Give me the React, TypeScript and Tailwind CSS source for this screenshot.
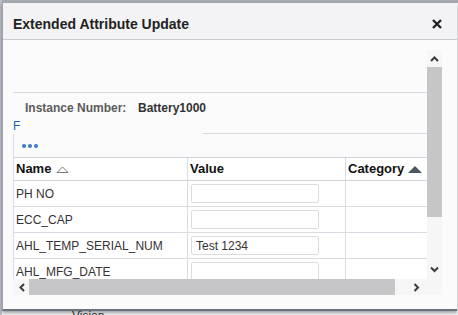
import React from "react";

const rows = [
  { name: "PH NO", value: "" },
  { name: "ECC_CAP", value: "" },
  { name: "AHL_TEMP_SERIAL_NUM", value: "Test 1234" },
  { name: "AHL_MFG_DATE", value: "" },
];

function Chevron({ dir }: { dir: "up" | "down" | "left" | "right" }) {
  const d = {
    up: "M1 6 L4.5 2.5 L8 6",
    down: "M1 2.5 L4.5 6 L8 2.5",
    left: "M6 1 L2.5 4.5 L6 8",
    right: "M2.5 1 L6 4.5 L2.5 8",
  }[dir];
  return (
    <svg width="9" height="9" viewBox="0 0 9 9">
      <path d={d} fill="none" stroke="#3b3b3f" strokeWidth="2" />
    </svg>
  );
}

export default function App() {
  return (
    <div className="relative w-[458px] h-[315px] overflow-hidden bg-[#f4f5f7] font-['Liberation_Sans',Arial,sans-serif]">
      {/* page behind the dialog */}
      <div className="absolute left-0 top-0 w-full h-[3px] bg-[#a6a9b2]" />
      <div className="absolute left-0 top-0 w-[2px] h-full bg-[#b9bcc6]" />
      <div className="absolute left-[72px] top-[310px] text-[12px] leading-[12px] text-[#333]">Vision</div>

      {/* dialog */}
      <div className="absolute left-[2px] top-[3px] w-[455px] h-[308px] flex flex-col bg-[#fbfbfc] border-l border-[#9ea3ad] border-b-[2px] border-b-[#6b7280] shadow-[0_2px_3px_rgba(0,0,0,0.35)]">
        {/* header */}
        <div className="h-[37px] shrink-0 flex items-center justify-between pl-[10px] pr-[15px] pt-[6px] bg-[#f3f3f5] border-b border-[#c9ccd3]">
          <span className="text-[14px] font-bold text-[#222] leading-none">Extended Attribute Update</span>
          <svg width="10" height="10" viewBox="0 0 10 10">
            <path d="M1 1 L9 9 M9 1 L1 9" stroke="#222" strokeWidth="2.4" />
          </svg>
        </div>

        {/* body */}
        <div className="flex-1 pt-[10px] pl-[10px] pr-[14px]">
          <div className="flex">
            {/* viewport */}
            <div className="w-[414px] h-[229px] overflow-hidden flex flex-col">
              <div className="h-[42px] shrink-0" />
              <div className="h-px bg-[#d7dbe2] shrink-0" />
              <div className="h-[26px] shrink-0 flex items-center pt-[4px] text-[12px] font-bold">
                <span className="ml-[12px] w-[113px] text-[#5b5b5b]">Instance Number:</span>
                <span className="text-[#333]">Battery1000</span>
              </div>
              <div className="h-[14px] shrink-0 text-[12px] text-[#1f5fa8] leading-[14px]">F</div>
              <div className="h-px shrink-0 ml-[190px] bg-[#d7dbe2]" />
              {/* table */}
              <div className="border-l border-[#d7dbe2] bg-white">
                <div className="h-[23px] flex items-center gap-[2px] pl-[8px] bg-[#fbfbfc]">
                  <span className="w-[4px] h-[4px] rounded-full bg-[#3a7cc0]" />
                  <span className="w-[4px] h-[4px] rounded-full bg-[#3a7cc0]" />
                  <span className="w-[4px] h-[4px] rounded-full bg-[#3a7cc0]" />
                </div>
                <div className="flex h-[24px] border-t border-b border-[#d0d5dd] text-[13px] font-bold text-[#111]">
                  <div className="w-[174px] flex items-center pl-[2px] gap-[5px] border-r border-[#d7dbe2]">
                    Name
                    <svg width="13" height="7" viewBox="0 0 13 7">
                      <path d="M1 6.5 L6.5 1 L12 6.5 Z" fill="none" stroke="#777" strokeWidth="1" />
                    </svg>
                  </div>
                  <div className="w-[158px] flex items-center pl-[2px] border-r border-[#d7dbe2]">Value</div>
                  <div className="flex-1 flex items-center pl-[2px] gap-[4px]">
                    Category
                    <svg width="14" height="7" viewBox="0 0 14 7">
                      <path d="M0 7 L7 0 L14 7 Z" fill="#4b5563" />
                    </svg>
                  </div>
                </div>
                {rows.map((r) => (
                  <div key={r.name} className="flex h-[26px] border-b border-[#d7dbe2] text-[12px] text-[#333]">
                    <div className="w-[174px] flex items-center pl-[2px] border-r border-[#d7dbe2]">{r.name}</div>
                    <div className="w-[158px] flex items-center pl-[3px] border-r border-[#d7dbe2]">
                      <div className="w-[128px] h-[19px] flex items-center pl-[4px] border border-[#dcdcdf] rounded-[2px] bg-white">
                        {r.value}
                      </div>
                    </div>
                    <div className="flex-1" />
                  </div>
                ))}
              </div>
            </div>
            {/* vertical scrollbar */}
            <div className="w-[15px] h-[229px] flex flex-col items-center bg-[#f6f6f7]">
              <div className="h-[17px] flex items-center justify-center pt-[2px]">
                <Chevron dir="up" />
              </div>
              <div className="w-full h-[150px] bg-[#c6c6c8]" />
              <div className="flex-1 flex items-end pb-[5px]">
                <Chevron dir="down" />
              </div>
            </div>
          </div>
          {/* horizontal scrollbar */}
          <div className="flex">
            <div className="w-[414px] h-[16px] flex items-center bg-[#f6f6f7]">
              <div className="w-[16px] flex justify-center pl-[2px]">
                <Chevron dir="left" />
              </div>
              <div className="w-[366px] h-full bg-[#c6c6c8]" />
              <div className="flex-1 flex justify-end pr-[6px]">
                <Chevron dir="right" />
              </div>
            </div>
            <div className="w-[15px] h-[16px] bg-[#f6f6f7]" />
          </div>
        </div>
      </div>
    </div>
  );
}
